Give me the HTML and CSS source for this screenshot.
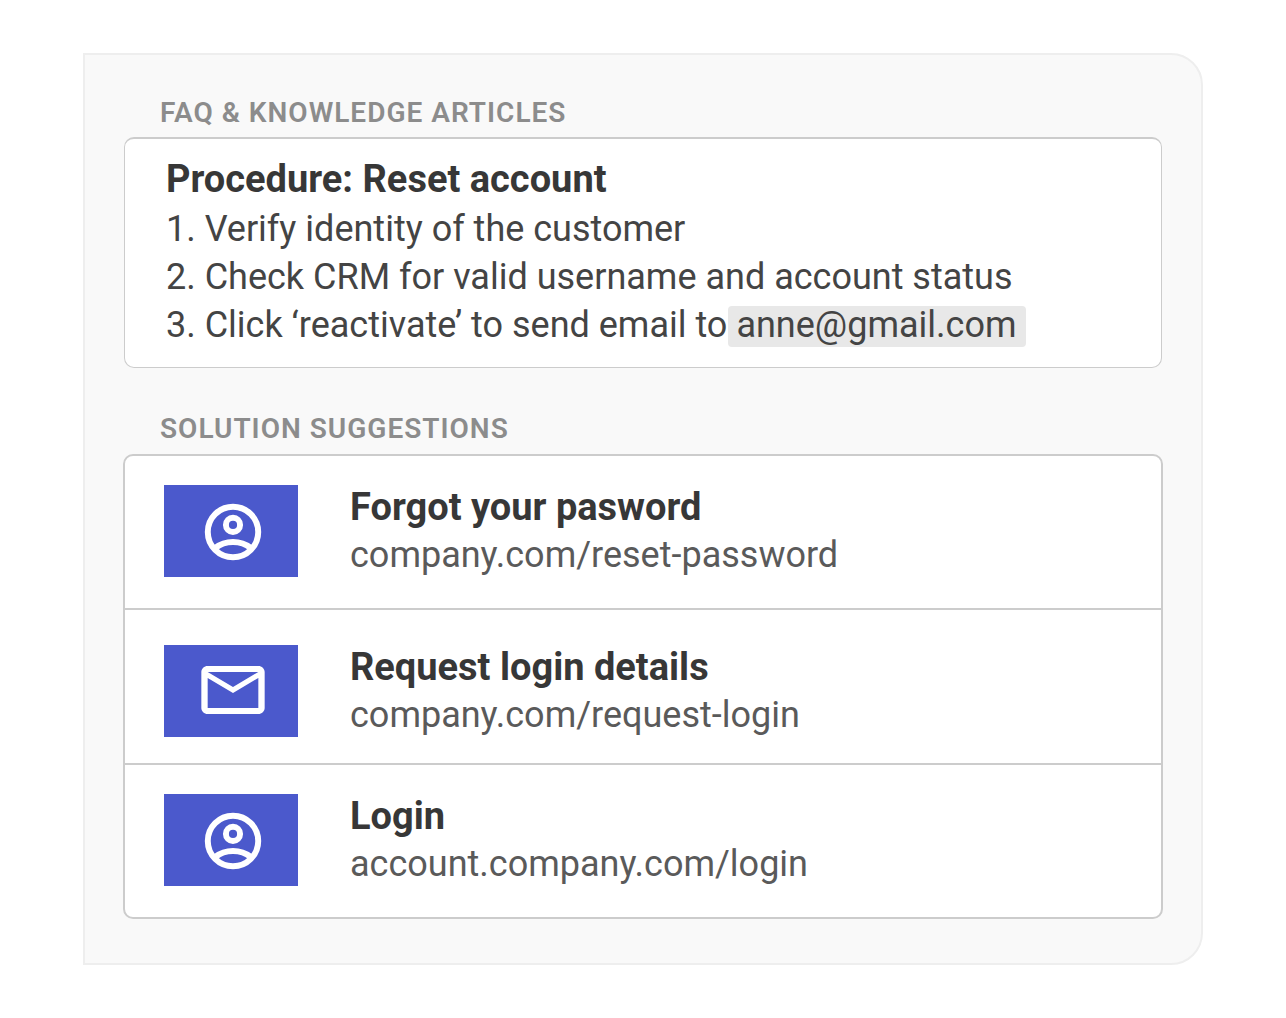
FILE: index.html
```html
<!DOCTYPE html>
<html lang="en">
<head>
  <meta charset="UTF-8">
  <title>Agent Assist</title>
  <link rel="stylesheet" href="styles.css">
</head>
<body>
  <main class="panel">
    <section class="articles">
      <h2>FAQ &amp; KNOWLEDGE ARTICLES</h2>
      <div class="card procedure">
        <h3>Procedure: Reset account</h3>
        <ol>
          <li>Verify identity of the customer</li>
          <li>Check CRM for valid username and account status</li>
          <li>Click ‘reactivate’ to send email to<span class="email">anne@gmail.com</span></li>
        </ol>
      </div>
    </section>

    <section class="suggestions">
      <h2>SOLUTION SUGGESTIONS</h2>
      <ul class="card">
        <li class="item">
          <div class="thumb">
            <svg width="68" height="68" viewBox="0 -.35 24 24" fill="none" stroke="#fff" stroke-width="2.1">
              <circle cx="12" cy="12" r="8.900"/>
              <circle cx="12" cy="9.5" r="2.5"/>
              <path d="M5.800 17.600C7.500 16.200 9.700 15.500 12 15.500s4.500.7 6.200 2.100"/>
            </svg>
          </div>
          <div class="text">
            <h3>Forgot your pasword</h3>
            <a href="#">company.com/reset-password</a>
          </div>
        </li>
        <li class="item request">
          <div class="thumb">
            <svg width="76" height="72" viewBox="0 .35 24 24" preserveAspectRatio="none" fill="#fff">
              <path d="M22 6c0-1.100-.9-2-2-2H4c-1.100 0-2 .9-2 2v12c0 1.100.9 2 2 2h16c1.100 0 2-.9 2-2V6zm-2 0l-8 5-8-5h16zm0 12H4V8l8 5 8-5v10z"/>
            </svg>
          </div>
          <div class="text">
            <h3>Request login details</h3>
            <a href="#">company.com/request-login</a>
          </div>
        </li>
        <li class="item">
          <div class="thumb">
            <svg width="68" height="68" viewBox="0 -.35 24 24" fill="none" stroke="#fff" stroke-width="2.1">
              <circle cx="12" cy="12" r="8.900"/>
              <circle cx="12" cy="9.5" r="2.5"/>
              <path d="M5.800 17.600C7.500 16.200 9.700 15.500 12 15.500s4.500.7 6.200 2.100"/>
            </svg>
          </div>
          <div class="text">
            <h3>Login</h3>
            <a href="#">account.company.com/login</a>
          </div>
        </li>
      </ul>
    </section>
  </main>
</body>
</html>
```
FILE: styles.css
```css
* {
  box-sizing: border-box;
}

body {
  margin: 0;
  padding: 53px 83px;
  background-color: #fff;
  font-family: Roboto, "Liberation Sans", sans-serif;
  font-size: 36px;
  line-height: 48px;
  color: #444;
}

h2, h3, ul, ol {
  margin: 0;
  padding: 0;
}

.panel {
  padding: 38px 38px 44px;
  background-color: #f9f9f9;
  border: 2px solid #eee;
  border-radius: 0 32px 32px 0;
}

h2 {
  padding: 0 37px;
  font-size: 28px;
  font-weight: 600;
  line-height: 40px;
  letter-spacing: 1px;
  color: #8c8c8c;
}

h3 {
  font-size: 38px;
  font-weight: 700;
  line-height: 48px;
  color: #373737;
}

.card {
  margin-top: 5px;
  background-color: #fff;
  border: 2px solid #ccc;
  border-radius: 10px;
  list-style: none;
}

.procedure {
  margin: 4px 1px 0;
  padding: 16px 41px 18px;
  border-width: 2px 1px 1px;
}

.procedure ol {
  margin-top: 2px;
  list-style: decimal inside;
}

.email {
  display: inline-block;
  margin-left: 1px;
  padding: 0 10px 3px 8px;
  line-height: 38px;
  background-color: #e8e8e8;
  border-radius: 4px;
}

.suggestions {
  margin-top: 41px;
}

.item {
  display: flex;
  align-items: center;
  gap: 52px;
  padding: 27px 39px 29px;
}

.item + .item {
  border-top: 2px solid #ccc;
}

.request {
  padding-top: 33px;
  padding-bottom: 24px;
}

.thumb {
  display: flex;
  align-items: center;
  justify-content: center;
  width: 134px;
  height: 92px;
  padding-left: 4px;
  background-color: #4b59cc;
}

.item a {
  color: #5a5a5a;
  text-decoration: none;
}
```
